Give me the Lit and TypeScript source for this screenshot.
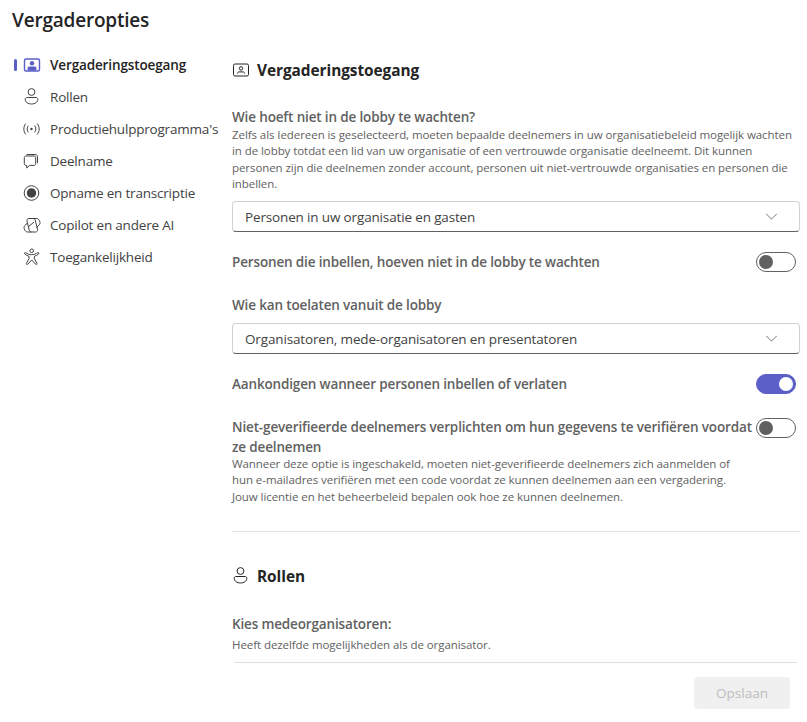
import { LitElement, html, css, svg } from "lit";
import { customElement } from "lit/decorators.js";

const person = svg`<circle cx="9.5" cy="5" r="3.4"/><path d="M3.2 12.2c0-1 .8-1.7 1.7-1.7h9.2c.9 0 1.7.7 1.7 1.7 0 3-2.9 4.8-6.3 4.8s-6.3-1.8-6.3-4.8Z"/>`;
const board = svg`<rect x="2.5" y="4" width="15" height="12" rx="1.5"/><circle cx="10" cy="8.4" r="1.7"/><path d="M6.5 13.5c0-1 .6-1.6 1.5-1.6h4c.9 0 1.5.6 1.5 1.6"/>`;
const boardFilled = svg`<rect x="2.5" y="4" width="15" height="12" rx="1.5"/><circle cx="10" cy="8.2" r="2.2" fill="#5b5fc7" stroke="none"/><path d="M5.6 15.5v-2.4c0-1 .8-1.6 1.6-1.6h5.6c.8 0 1.6.6 1.6 1.6v2.4Z" fill="#5b5fc7" stroke="none"/>`;
const signal = svg`<circle cx="9.5" cy="10" r="1.2" fill="currentColor" stroke="none"/><path d="M6.3 6.6c-1.5 2-1.5 4.8 0 6.8M12.7 6.6c1.5 2 1.5 4.8 0 6.8M3.8 4.6c-2.6 3.2-2.6 7.6 0 10.8M15.2 4.6c2.6 3.2 2.6 7.6 0 10.8"/>`;
const chat = svg`<path d="M4 5h8c1 0 1.7.7 1.7 1.7v6c0 1-.7 1.7-1.7 1.7H7.6L4.7 17v-2.6H4c-1 0-1.7-.7-1.7-1.7v-6C2.3 5.7 3 5 4 5Z"/><path d="M4.6 3.5h8.6c1.3 0 2.3 1 2.3 2.3v6.4"/>`;
const rec = svg`<circle cx="9.5" cy="10" r="7.3"/><circle cx="9.5" cy="10" r="4.7" fill="currentColor" stroke="none"/>`;
const copilot = svg`<path d="M7 3.5h4c1.1 0 1.9.7 2.2 1.7l2.4 9.2c.4 1.4-.6 2.6-2 2.6H9.5c-1.1 0-1.9-.7-2.2-1.7L5 6.2C4.7 4.8 5.6 3.5 7 3.5Z"/><path d="M5.5 8 2.9 10.5c-1 1-1 2.4-.5 3.7.5 1.5 1.6 2.8 3.2 2.8h4"/><path d="M11 3.5h3.5c1.6 0 2.7 1.3 3.2 2.8.5 1.3.5 2.7-.5 3.7L14.5 12.6"/><path d="M6.4 11.8 12 7"/>`;
const access = svg`<circle cx="9.7" cy="3.8" r="1.8"/><path d="M3.6 5.6c-.7-.5-1.6.6-.9 1.3C4 8.1 5.5 8.9 7 9.3v2.4l-2.6 4.6c-.5 1 .9 1.8 1.5.8L9.7 13l3.8 4.1c.6 1 2 .2 1.5-.8l-2.6-4.6V9.3c1.5-.4 3-1.2 4.3-2.4.7-.7-.2-1.8-.9-1.3C14 6.900 12 7.700 9.700 7.700S5.400 6.900 3.600 5.600Z"/>`;

const icon = (c: unknown) => html`<svg class="ico" viewBox="0 0 20 20">${c}</svg>`;
const chev = html`<svg class="chev" viewBox="0 0 14 8"><path d="M1 1l6 6 6-6"/></svg>`;

const NAV: [string, unknown][] = [
  ["Rollen", person],
  ["Productiehulpprogramma's", signal],
  ["Deelname", chat],
  ["Opname en transcriptie", rec],
  ["Copilot en andere AI", copilot],
  ["Toegankelijkheid", access],
];

@customElement("app-root")
export class AppRoot extends LitElement {
  static styles = css`
    :host { display: block; width: 807px; height: 722px; overflow: hidden; position: relative; background: #fff;
      font-family: "Open Sans", "Noto Sans", sans-serif; color: #424242; }
    * { box-sizing: border-box; }
    h1 { margin: 0; padding: 7px 0 0 12px; font-size: 19px; line-height: 26px; font-weight: 600; color: #242424; letter-spacing: -.2px; }
    .body { display: flex; padding-top: 16px; }
    nav { width: 232px; flex: none; display: flex; flex-direction: column; }
    .item { height: 32px; display: flex; align-items: center; padding-left: 22px; gap: 8px; font-size: 13.5px; letter-spacing: -.2px; white-space: nowrap; position: relative; }
    .item.on { font-weight: 600; color: #242424; letter-spacing: -.13px; }
    .item.on::before { content: ""; position: absolute; left: 14px; top: 10px; width: 3px; height: 12px; border-radius: 2px; background: #5b5fc7; }
    .ico { width: 20px; height: 20px; flex: none; fill: none; stroke: currentColor; stroke-width: 1; }
    .on .ico { stroke: #5b5fc7; stroke-width: 1.4; }
    main { width: 568px; padding-top: 10px; }
    h2 { margin: 0; display: flex; align-items: center; gap: 6px; height: 22px; font-size: 15.4px; font-weight: 700; color: #242424; letter-spacing: -.05px; }
    h2 .ico { color: #242424; margin-left: -1px; }
    .lbl { font-size: 13.5px; line-height: 20px; font-weight: 600; color: #616161; letter-spacing: -.15px; white-space: nowrap; }
    .desc { font-size: 11.5px; line-height: 16.3px; color: #616161; letter-spacing: -.07px; white-space: nowrap; }
    .q1 { margin-top: 26px; }
    .select { height: 31px; margin-top: 9px; border: 1px solid #d1d1d1; border-bottom-color: #616161; border-radius: 4px; display: flex; align-items: center; justify-content: space-between; padding: 0 21px 0 12px; font-size: 13.5px; letter-spacing: -.15px; color: #424242; }
    .chev { width: 13px; height: 7px; fill: none; stroke: #616161; stroke-width: 1; }
    .row { display: flex; justify-content: space-between; align-items: center; }
    .sw { width: 40px; height: 20px; border-radius: 10px; border: 1px solid #616161; padding: 2px; flex: none; margin-right: 4px; display: flex; }
    .sw i { width: 14px; height: 14px; border-radius: 50%; background: #616161; display: block; flex: none; }
    .sw.on { background: #5b5fc7; border-color: #5b5fc7; justify-content: flex-end; }
    .sw.on i { background: #fff; }
    .r1 { margin-top: 18px; height: 24px; }
    .l2 { margin-top: 21px; }
    .select.s2 { margin-top: 8px; }
    .r2 { margin-top: 18px; height: 24px; }
    .r3 { margin-top: 21px; align-items: flex-start; }
    .r3 .txt { width: 524px; }
    .r3 .desc { margin-top: -1px; }
    .r3 .sw { margin-top: 1px; }
    hr { border: 0; border-top: 1px solid #e0e0e0; margin: 0; }
    .sep { margin-top: 26px; width: 568px; }
    .roles { margin-top: 33px; }
    .q2 { margin-top: 27px; }
    .q2 .desc { margin-top: 3px; }
    .foot { position: absolute; left: 234px; right: 10px; top: 662px; border-top: 1px solid #e0e0e0; }
    .save { position: absolute; right: 7px; top: 14px; width: 96px; height: 32px; border-radius: 4px; background: #f0f0f0; color: #bdbdbd; font-size: 13.5px; font-weight: 500; display: flex; align-items: center; justify-content: center; }
  `;

  render() {
    return html`
      <h1>Vergaderopties</h1>
      <div class="body">
        <nav>
          <div class="item on">${icon(boardFilled)}<span>Vergaderingstoegang</span></div>
          ${NAV.map(([t, c]) => html`<div class="item">${icon(c)}<span>${t}</span></div>`)}
        </nav>
        <main>
          <h2>${icon(board)}Vergaderingstoegang</h2>
          <div class="lbl q1">Wie hoeft niet in de lobby te wachten?</div>
          <div class="desc">Zelfs als Iedereen is geselecteerd, moeten bepaalde deelnemers in uw organisatiebeleid mogelijk wachten<br>in de lobby totdat een lid van uw organisatie of een vertrouwde organisatie deelneemt. Dit kunnen<br>personen zijn die deelnemen zonder account, personen uit niet-vertrouwde organisaties en personen die<br>inbellen.</div>
          <div class="select"><span>Personen in uw organisatie en gasten</span>${chev}</div>
          <div class="row r1"><div class="lbl">Personen die inbellen, hoeven niet in de lobby te wachten</div><div class="sw"><i></i></div></div>
          <div class="lbl l2">Wie kan toelaten vanuit de lobby</div>
          <div class="select s2"><span>Organisatoren, mede-organisatoren en presentatoren</span>${chev}</div>
          <div class="row r2"><div class="lbl">Aankondigen wanneer personen inbellen of verlaten</div><div class="sw on"><i></i></div></div>
          <div class="row r3">
            <div class="txt">
              <div class="lbl">Niet-geverifieerde deelnemers verplichten om hun gegevens te verifiëren voordat<br>ze deelnemen</div>
              <div class="desc">Wanneer deze optie is ingeschakeld, moeten niet-geverifieerde deelnemers zich aanmelden of<br>hun e-mailadres verifiëren met een code voordat ze kunnen deelnemen aan een vergadering.<br>Jouw licentie en het beheerbeleid bepalen ook hoe ze kunnen deelnemen.</div>
            </div>
            <div class="sw"><i></i></div>
          </div>
          <hr class="sep" />
          <h2 class="roles">${icon(person)}Rollen</h2>
          <div class="q2">
            <div class="lbl">Kies medeorganisatoren:</div>
            <div class="desc">Heeft dezelfde mogelijkheden als de organisator.</div>
          </div>
        </main>
      </div>
      <div class="foot"><div class="save">Opslaan</div></div>
    `;
  }
}
